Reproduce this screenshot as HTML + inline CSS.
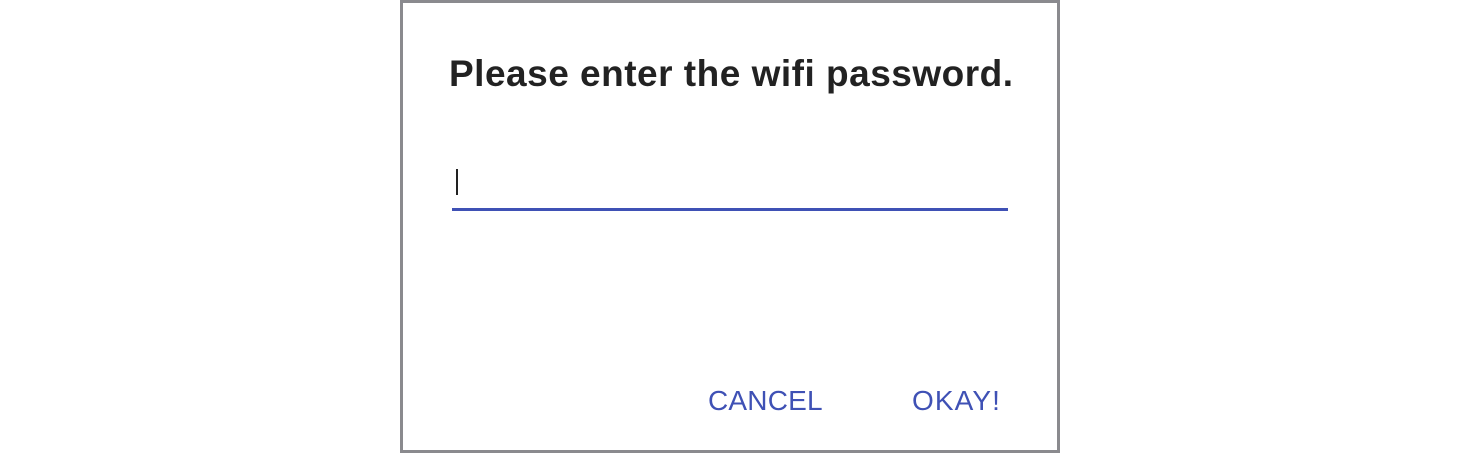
<!DOCTYPE html>
<html><head><style>
html,body{margin:0;padding:0;background:#fff;width:1460px;height:452px;overflow:hidden}
.box{position:absolute;left:400px;top:0;width:654px;height:447px;border:3px solid #8a8a8e;background:#fff}
.t{position:absolute;left:449px;top:53px;font:bold 37px "Liberation Sans",sans-serif;color:#222;white-space:nowrap;letter-spacing:0.5px}
.cur{position:absolute;left:456px;top:169px;width:2px;height:26px;background:#222}
.ul{position:absolute;left:452px;top:208px;width:556px;height:3px;background:#3f51b5}
.b{position:absolute;top:385px;font:28px "Liberation Sans",sans-serif;color:#3f51b5;white-space:nowrap;letter-spacing:0.2px}
</style></head><body>
<div class="box"></div>
<div class="t">Please enter the wifi password.</div>
<div class="cur"></div>
<div class="ul"></div>
<div class="b" style="left:708px">CANCEL</div>
<div class="b" style="left:912px;letter-spacing:1.1px">OKAY!</div>
</body></html>
